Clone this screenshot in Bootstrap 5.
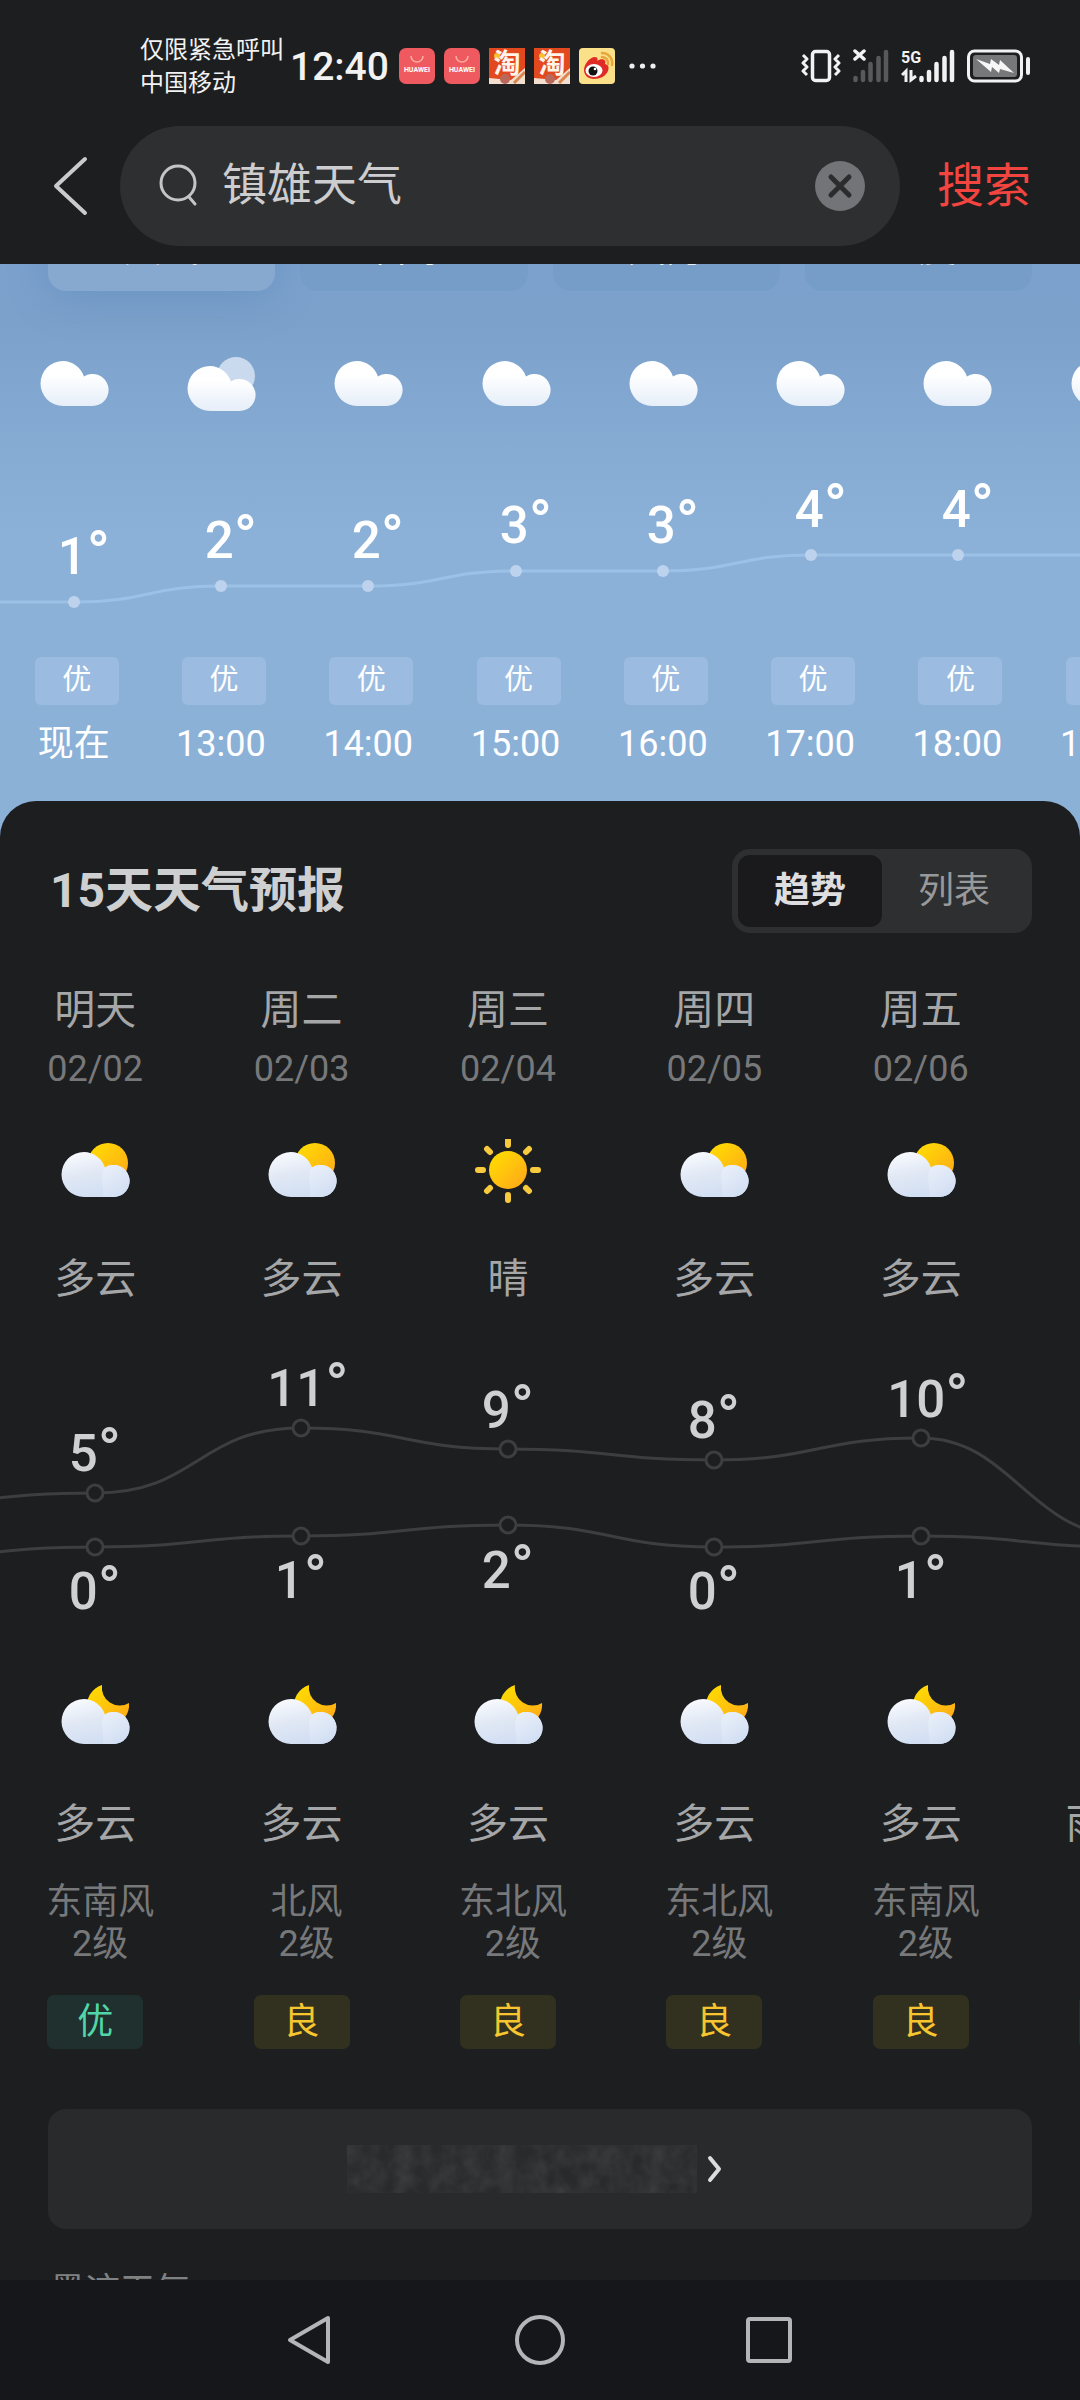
<!DOCTYPE html>
<html lang="zh-CN">
<head>
<meta charset="utf-8">
<meta name="viewport" content="width=device-width, initial-scale=1">
<title>镇雄天气</title>
<link href="https://cdn.jsdelivr.net/npm/bootstrap@5.3.0/dist/css/bootstrap.min.css" rel="stylesheet">
<style>
  :root { --ink: #1d1e20; --raised: #2e2f31; }
  body { background: var(--ink); font-family: Roboto, "Noto Sans CJK SC", sans-serif; color: #a5a6a8; }
  button { border: 0; background: none; color: inherit; padding: 0; }
  svg { display: block; flex: none; }
  .shell { height: 100vh; }

  .status { height: 66px; margin-top: 34px; padding: 0 49px 0 140px; color: #f2f2f2; }
  .carrier { font-size: 24px; line-height: 33px; }
  .clock { font-size: 39px; line-height: 48px; font-weight: 500; margin: 0 10px 0 6px; }
  .apps { gap: 9px; padding-bottom: 3px; }
  .signals { gap: 12px; padding-bottom: 3px; }
  .search-row { padding: 26px 49px 18px 50px; }
  .back { width: 70px; height: 120px; }
  .pill { height: 120px; border-radius: 60px; background: var(--raised); padding: 0 35px 0 36px; }
  .pill input { background: none; border: 0; outline: 0; color: #cdcdcf; font-size: 45px; line-height: 64px; padding: 0; margin-left: 22px; min-width: 0; }
  .go { color: #f2453f; font-size: 47px; line-height: 64px; margin-left: 37px; }

  .sky { background: linear-gradient(#7ba1cd 0, #7ca1ca 60px, #82a8d1 140px, #8cb1d8 270px, #8cb1d7 100%); padding-bottom: 73px; color: #fff; }
  .tabs { height: 27px; padding: 0 48px; gap: 25px; }
  .tabs button { flex: 1 1 0; height: 84px; border-radius: 18px; background: #769dc8; font-size: 38px; line-height: 48px; padding-bottom: 2px; }
  .tabs button.on { background: #87a8cf; box-shadow: 0 8px 40px #4f7fb355; }
  .hour-icons { padding-top: 62px; }
  .strip > * { flex: 0 0 13.64%; display: flex; justify-content: center; }
  .chart { width: 100%; height: auto; }
  .chart text { font-size: 51px; font-weight: 500; text-anchor: middle; }
  .chart .deg { font-size: 61px; }
  .aqi-row > * { padding-left: 6px; }
  .aqi-row span { width: 84px; height: 48px; line-height: 46px; border-radius: 6px; background: #9bbce0; font-size: 29px; text-align: center; }
  .hours { margin-top: 15px; font-size: 36px; line-height: 48px; }

  .panel { background: var(--ink); border-radius: 36px 36px 0 0; margin-top: -40px; padding-top: 48px; }
  .panel-head { padding: 0 48px 0 50px; height: 84px; }
  h1 { font-size: 48px; line-height: 64px; font-weight: 700; color: #cecfd1; margin: 0; }
  .toggle { width: 300px; height: 84px; border-radius: 18px; background: var(--raised); padding: 6px; font-size: 36px; line-height: 48px; color: #98999b; }
  .toggle button { flex: 1 1 0; border-radius: 12px; }
  .toggle .on { background: #1a1a1c; color: #dedee0; font-weight: 700; }
  .days { margin-left: -8px; }
  .days > div { flex: 0 0 18.97%; display: flex; flex-direction: column; align-items: center; }
  .day-top { margin-top: 53px; }
  .label { font-size: 41px; line-height: 48px; white-space: nowrap; }
  .date { font-size: 36px; line-height: 42px; margin: 14px 0 49px; color: #77787a; }
  .day-top svg { margin-bottom: 52px; }
  .day-top { margin-bottom: -1px; }
  .night svg { margin-bottom: 50px; overflow: visible; }
  .wind { margin-top: 33px; margin-bottom: 30px; padding-left: 10px; min-height: 84px; font-size: 36px; line-height: 42px; text-align: center; color: #77787a; }
  .air { width: 96px; height: 54px; line-height: 54px; border-radius: 7px; font-size: 36px; text-align: center; background: #32301e; color: #f6c52f; }
  .air.good { background: #20302e; color: #50d6a8; }
  .more { height: 120px; margin: 60px 48px 39px; border-radius: 18px; background: #292a2c; }
  .source { padding-left: 50px; font-size: 35px; line-height: 48px; color: #808183; }
  .sysnav { height: 120px; background: #16171b; padding: 0 284px; }
</style>
</head>
<body>
<svg width="0" height="0" class="position-absolute" aria-hidden="true">
  <defs>
    <linearGradient id="gWhite" gradientUnits="userSpaceOnUse" x1="0" y1="8" x2="0" y2="53"><stop offset=".3" stop-color="#fff"/><stop offset="1" stop-color="#e6eef9"/></linearGradient>
    <linearGradient id="gBlue" gradientUnits="userSpaceOnUse" x1="20" y1="8" x2="30" y2="53"><stop offset="0" stop-color="#f8fafe"/><stop offset=".55" stop-color="#dfe7f4"/><stop offset="1" stop-color="#d2dff3"/></linearGradient>
    <linearGradient id="gPuff" gradientUnits="userSpaceOnUse" x1="44" y1="28" x2="60" y2="53"><stop offset="0" stop-color="#e8eef9"/><stop offset="1" stop-color="#d2dff3"/></linearGradient>
    <linearGradient id="gSun" x1="0" y1="0" x2="1" y2="1"><stop offset=".2" stop-color="#ffd505"/><stop offset="1" stop-color="#ffa41b"/></linearGradient>
    <symbol id="cloud" viewBox="0 0 76 64"><path fill="url(#gWhite)" d="M27 8a22.500 22.500 0 0 1 21 15.500a16 16 0 1 1 8 29.500H27a22.500 22.500 0 0 1 0-45z"/></symbol>
    <symbol id="overcast" viewBox="0 0 76 64"><circle cx="53" cy="23" r="19" fill="#c9d9ee"/><path transform="translate(0 5)" fill="url(#gWhite)" d="M27 8a22.500 22.500 0 0 1 21 15.500a16 16 0 1 1 8 29.500H27a22.500 22.500 0 0 1 0-45z"/></symbol>
    <g id="grayCloud" transform="translate(0 5)"><path fill="url(#gBlue)" d="M27 8a22.500 22.500 0 0 1 21 15.500a16 16 0 1 1 8 29.500H27a22.500 22.500 0 0 1 0-45z"/><path fill="url(#gPuff)" d="M48 23.500a16 16 0 1 1 8 29.500H46C48 46 42 32 48 23.500z"/></g>
    <symbol id="cloudy" viewBox="0 0 76 64"><circle cx="51" cy="24" r="20" fill="url(#gSun)"/><use href="#grayCloud"/></symbol>
    <symbol id="sunny" viewBox="0 0 76 64"><circle cx="38" cy="31" r="19" fill="url(#gSun)"/><g stroke="#f7cb3d" stroke-width="6" stroke-linecap="round"><path d="M38 1v5M38 56v5M8 31h5M63 31h5M17 10l3 3M56 49l3 3M59 10l-3 3M20 49l-3 3"/></g></symbol>
    <symbol id="cloudnight" viewBox="0 0 76 64" overflow="visible"><path fill="url(#gSun)" d="M45-1A21 21 0 1 0 72 17A18 18 0 0 1 45-1z"/><use href="#grayCloud"/></symbol>
    <symbol id="hw" viewBox="0 0 36 36"><rect width="36" height="36" rx="7" fill="#ee5a5f"/><path d="M12 8a6 6 0 0 0 12 0" fill="none" stroke="#ffb09a" stroke-width="1.500"/><text x="18" y="24" font-size="7" font-weight="700" text-anchor="middle" fill="#fff">HUAWEI</text></symbol>
    <symbol id="tb" viewBox="0 0 36 36"><path fill="#e2491f" d="M0 0h36v36H0z"/><path fill="#f3dfd0" d="M36 20v16H0v-6l22 2z"/><circle cx="16" cy="31" r="5" fill="#b9695c"/><path d="M25 35L36 24" stroke="#d9854f" stroke-width="3"/><circle cx="8" cy="8" r="3" fill="#f7c02f"/><text x="18" y="25" font-size="27" font-weight="700" text-anchor="middle" fill="#fff3ea">淘</text></symbol>
  </defs>
</svg>

<div class="shell d-flex flex-column overflow-hidden">
  <header class="flex-shrink-0">
    <div class="status d-flex align-items-center">
      <div class="carrier text-nowrap">仅限紧急呼叫<br>中国移动</div>
      <div class="clock">12:40</div>
      <div class="apps d-flex align-items-center">
        <svg width="36" height="36"><use href="#hw"/></svg>
        <svg width="36" height="36"><use href="#hw"/></svg>
        <svg width="36" height="36"><use href="#tb"/></svg>
        <svg width="36" height="36"><use href="#tb"/></svg>
        <svg width="36" height="36" viewBox="0 0 36 36"><rect width="36" height="36" rx="4" fill="#fbe08a"/><path fill="#e02a25" d="M5 22C5 16 11 9 16 9c3 0 3 3 2 4 4-3 10-2 8 3 4 1 4 4 3 7-2 5-8 8-14 8S5 27 5 22z"/><ellipse cx="15" cy="22.500" rx="8.500" ry="6.500" fill="#fff"/><circle cx="14" cy="23" r="4.500" fill="#111"/><circle cx="16" cy="21" r="1.300" fill="#fff"/><path d="M23 9a6 6 0 0 1 6 7M23 5a10 10 0 0 1 10 12" fill="none" stroke="#e9a63a" stroke-width="2.500" stroke-linecap="round"/></svg>
        <svg width="36" height="36" viewBox="0 0 36 36" fill="#eee"><circle cx="8" cy="18" r="2.600"/><circle cx="18.500" cy="18" r="2.600"/><circle cx="29" cy="18" r="2.600"/></svg>
      </div>
      <div class="signals d-flex align-items-center ms-auto">
        <svg width="40" height="36" viewBox="0 0 40 36" fill="none" stroke="#f2f2f2"><rect x="11.500" y="3.500" width="17" height="29" rx="3" stroke-width="3.500"/><path d="M2 7l4 4-4 4 4 4-4 4 4 4M38 7l-4 4 4 4-4 4 4 4-4 4" stroke-width="3" stroke-linejoin="round"/></svg>
        <svg width="36" height="36" viewBox="0 0 36 36"><path d="M2 3l9 8M11 3l-9 8" stroke="#f2f2f2" stroke-width="3.500" stroke-linecap="round"/><path d="M2.500 30v2M10 24v8M17.500 16v16M25.500 10v22M33 4v28" stroke="#58595b" stroke-width="4.500" stroke-linecap="round"/></svg>
        <svg width="54" height="36" viewBox="0 0 54 36"><text x="0" y="15" font-size="16" font-weight="700" fill="#f2f2f2">5G</text><path d="M1 27l4-4v11M10 22v10l5-4" stroke="#f2f2f2" stroke-width="3" fill="none"/><path d="M20.500 30v2M28 24v8M35.500 16v16M43.500 10v22M51 4v28" stroke="#f2f2f2" stroke-width="4.500" stroke-linecap="round"/></svg>
        <svg width="64" height="36" viewBox="0 0 64 36"><rect x="1.500" y="3" width="53" height="30" rx="6" fill="none" stroke="#f2f2f2" stroke-width="3"/><rect x="6" y="7" width="44" height="22" rx="3" fill="#77787a"/><path d="M9 11l14 5 1-5 8 6 1-5 14 13-14-4-1 4-7-6-1 5z" fill="#f7f7f7"/><path d="M61 11v14" stroke="#f2f2f2" stroke-width="4" stroke-linecap="round"/></svg>
      </div>
    </div>
    <div class="search-row d-flex align-items-center">
      <button class="back" aria-label="返回"><svg width="40" height="64" viewBox="0 0 40 64" fill="none" stroke="#cbcbcd" stroke-width="4" stroke-linecap="round" stroke-linejoin="round"><path d="M35 5L6 32l29 27"/></svg></button>
      <form class="pill d-flex align-items-center flex-grow-1" onsubmit="return false">
        <svg width="44" height="48" viewBox="0 0 44 48" fill="none" stroke="#c4c5c7" stroke-width="3" stroke-linecap="round"><circle cx="22" cy="21" r="17"/><path d="M33 35l6 7"/></svg>
        <input type="text" class="flex-grow-1" value="镇雄天气" aria-label="搜索内容">
        <button type="button" aria-label="清除"><svg width="50" height="50" viewBox="0 0 50 50"><circle cx="25" cy="25" r="25" fill="#737477"/><path d="M16 16l18 18M34 16L16 34" stroke="#2b2c2e" stroke-width="5" stroke-linecap="round"/></svg></button>
      </form>
      <button class="go text-nowrap">搜索</button>
    </div>
  </header>

  <main class="flex-grow-1 overflow-hidden">
    <section class="sky">
      <div class="tabs d-flex align-items-end"><button class="on">天气</button><button>降水</button><button>风力</button><button>湿度</button></div>
      <div class="strip hour-icons d-flex overflow-hidden">
        <div><svg width="76" height="64"><use href="#cloud"/></svg></div>
        <div><svg width="76" height="64"><use href="#overcast"/></svg></div>
        <div><svg width="76" height="64"><use href="#cloud"/></svg></div>
        <div><svg width="76" height="64"><use href="#cloud"/></svg></div>
        <div><svg width="76" height="64"><use href="#cloud"/></svg></div>
        <div><svg width="76" height="64"><use href="#cloud"/></svg></div>
        <div><svg width="76" height="64"><use href="#cloud"/></svg></div>
        <div><svg width="76" height="64"><use href="#cloud"/></svg></div>
      </div>
      <svg class="chart" viewBox="0 0 1080 240" role="img" aria-label="逐小时气温">
        <path d="M0 185H74C148 185 148 169 221 169H368C442 169 442 154 516 154H663C737 154 737 138 811 138H1080" fill="none" stroke="#9cc1e6" stroke-width="3"/>
        <g fill="#bdd3ed"><circle cx="74" cy="185" r="6"/><circle cx="221" cy="169" r="6"/><circle cx="368" cy="169" r="6"/><circle cx="516" cy="154" r="6"/><circle cx="663" cy="154" r="6"/><circle cx="811" cy="138" r="6"/><circle cx="958" cy="138" r="6"/></g>
        <g fill="#fff"><text x="84" y="157">1<tspan class="deg">°</tspan></text><text x="231" y="141">2<tspan class="deg">°</tspan></text><text x="378" y="141">2<tspan class="deg">°</tspan></text><text x="526" y="126">3<tspan class="deg">°</tspan></text><text x="673" y="126">3<tspan class="deg">°</tspan></text><text x="821" y="110">4<tspan class="deg">°</tspan></text><text x="968" y="110">4<tspan class="deg">°</tspan></text></g>
      </svg>
      <div class="strip aqi-row d-flex overflow-hidden">
        <div><span>优</span></div><div><span>优</span></div><div><span>优</span></div><div><span>优</span></div><div><span>优</span></div><div><span>优</span></div><div><span>优</span></div><div><span></span></div>
      </div>
      <div class="strip hours d-flex overflow-hidden">
        <div>现在</div><div>13:00</div><div>14:00</div><div>15:00</div><div>16:00</div><div>17:00</div><div>18:00</div><div>19:00</div>
      </div>
    </section>

    <section class="panel position-relative">
      <div class="panel-head d-flex align-items-center justify-content-between">
        <h1>15天天气预报</h1>
        <div class="toggle d-flex"><button class="on">趋势</button><button>列表</button></div>
      </div>
      <div class="overflow-hidden">
        <div class="days day-top d-flex">
          <div><div class="label">明天</div><div class="date">02/02</div><svg width="76" height="64"><use href="#cloudy"/></svg><div class="label">多云</div></div>
          <div><div class="label">周二</div><div class="date">02/03</div><svg width="76" height="64"><use href="#cloudy"/></svg><div class="label">多云</div></div>
          <div><div class="label">周三</div><div class="date">02/04</div><svg width="76" height="64"><use href="#sunny"/></svg><div class="label">晴</div></div>
          <div><div class="label">周四</div><div class="date">02/05</div><svg width="76" height="64"><use href="#cloudy"/></svg><div class="label">多云</div></div>
          <div><div class="label">周五</div><div class="date">02/06</div><svg width="76" height="64"><use href="#cloudy"/></svg><div class="label">多云</div></div>
        </div>
        <svg class="chart" viewBox="0 0 1080 384" role="img" aria-label="每日最高与最低气温">
          <g fill="none" stroke="#3d3e40" stroke-width="3">
            <path d="M-111 202C-8 202-8 191 95 191C198 191 198 126 301 126C404 126 404 147 508 147C611 147 611 158 714 158C817 158 817 136 921 136C1012 136 1030 234 1127 234"/>
            <path d="M-111 256C-8 256-8 245 95 245C198 245 198 234 301 234C404 234 404 223 508 223C611 223 611 245 714 245C817 245 817 234 921 234C1024 234 1024 245 1127 245"/>
            <g fill="#1d1e20"><circle cx="95" cy="191" r="8"/><circle cx="301" cy="126" r="8"/><circle cx="508" cy="147" r="8"/><circle cx="714" cy="158" r="8"/><circle cx="921" cy="136" r="8"/><circle cx="95" cy="245" r="8"/><circle cx="301" cy="234" r="8"/><circle cx="508" cy="223" r="8"/><circle cx="714" cy="245" r="8"/><circle cx="921" cy="234" r="8"/></g>
          </g>
          <g fill="#cfd0d2"><text x="95" y="169">5<tspan class="deg">°</tspan></text><text x="308" y="104">11<tspan class="deg">°</tspan></text><text x="508" y="126">9<tspan class="deg">°</tspan></text><text x="714" y="136">8<tspan class="deg">°</tspan></text><text x="928" y="115">10<tspan class="deg">°</tspan></text><text x="95" y="307">0<tspan class="deg">°</tspan></text><text x="301" y="296">1<tspan class="deg">°</tspan></text><text x="508" y="286">2<tspan class="deg">°</tspan></text><text x="714" y="307">0<tspan class="deg">°</tspan></text><text x="921" y="296">1<tspan class="deg">°</tspan></text></g>
        </svg>
        <div class="days night d-flex">
          <div><svg width="76" height="64"><use href="#cloudnight"/></svg><div class="label">多云</div><div class="wind">东南风<br>2级</div><div class="air good">优</div></div>
          <div><svg width="76" height="64"><use href="#cloudnight"/></svg><div class="label">多云</div><div class="wind">北风<br>2级</div><div class="air">良</div></div>
          <div><svg width="76" height="64"><use href="#cloudnight"/></svg><div class="label">多云</div><div class="wind">东北风<br>2级</div><div class="air">良</div></div>
          <div><svg width="76" height="64"><use href="#cloudnight"/></svg><div class="label">多云</div><div class="wind">东北风<br>2级</div><div class="air">良</div></div>
          <div><svg width="76" height="64"><use href="#cloudnight"/></svg><div class="label">多云</div><div class="wind">东南风<br>2级</div><div class="air">良</div></div>
          <div><svg width="76" height="64"></svg><div class="label">雨夹雪</div><div class="wind"></div><div class="air good"></div></div>
        </div>
      </div>
      <div class="d-flex"><button class="more flex-grow-1 d-flex align-items-center justify-content-center" aria-label="查看更多">
        <svg width="350" height="48" viewBox="0 0 350 48"><filter id="grain" x="0" y="0" width="1" height="1"><feTurbulence type="fractalNoise" baseFrequency=".06 .05" numOctaves="3" seed="4"/><feColorMatrix values="0 0 0 0 .11  0 0 0 0 .11  0 0 0 0 .12  1.600 0 0 0 -.4"/></filter><rect width="350" height="48" filter="url(#grain)" opacity=".35"/></svg>
        <svg width="36" height="36" viewBox="0 0 36 36" fill="none" stroke="#dcdcde" stroke-width="4" stroke-linecap="round" stroke-linejoin="round"><path d="M13 7l9 11-9 11"/></svg>
      </button></div>
      <div class="source">墨迹天气</div>
    </section>
  </main>

  <nav class="sysnav flex-shrink-0 d-flex align-items-center justify-content-between" aria-label="系统导航">
    <button aria-label="返回"><svg width="52" height="52" viewBox="0 0 52 52" fill="none" stroke="#b4b5b7" stroke-width="4" stroke-linejoin="round"><path d="M44 4v44L6 26z"/></svg></button>
    <button aria-label="主屏幕"><svg width="52" height="52" viewBox="0 0 52 52" fill="none" stroke="#b4b5b7" stroke-width="4"><circle cx="26" cy="26" r="23"/></svg></button>
    <button aria-label="最近任务"><svg width="52" height="52" viewBox="0 0 52 52" fill="none" stroke="#b4b5b7" stroke-width="4"><rect x="4" y="5" width="42" height="42" rx="2"/></svg></button>
  </nav>
</div>
<script src="https://cdn.jsdelivr.net/npm/bootstrap@5.3.0/dist/js/bootstrap.bundle.min.js"></script>
</body>
</html>
